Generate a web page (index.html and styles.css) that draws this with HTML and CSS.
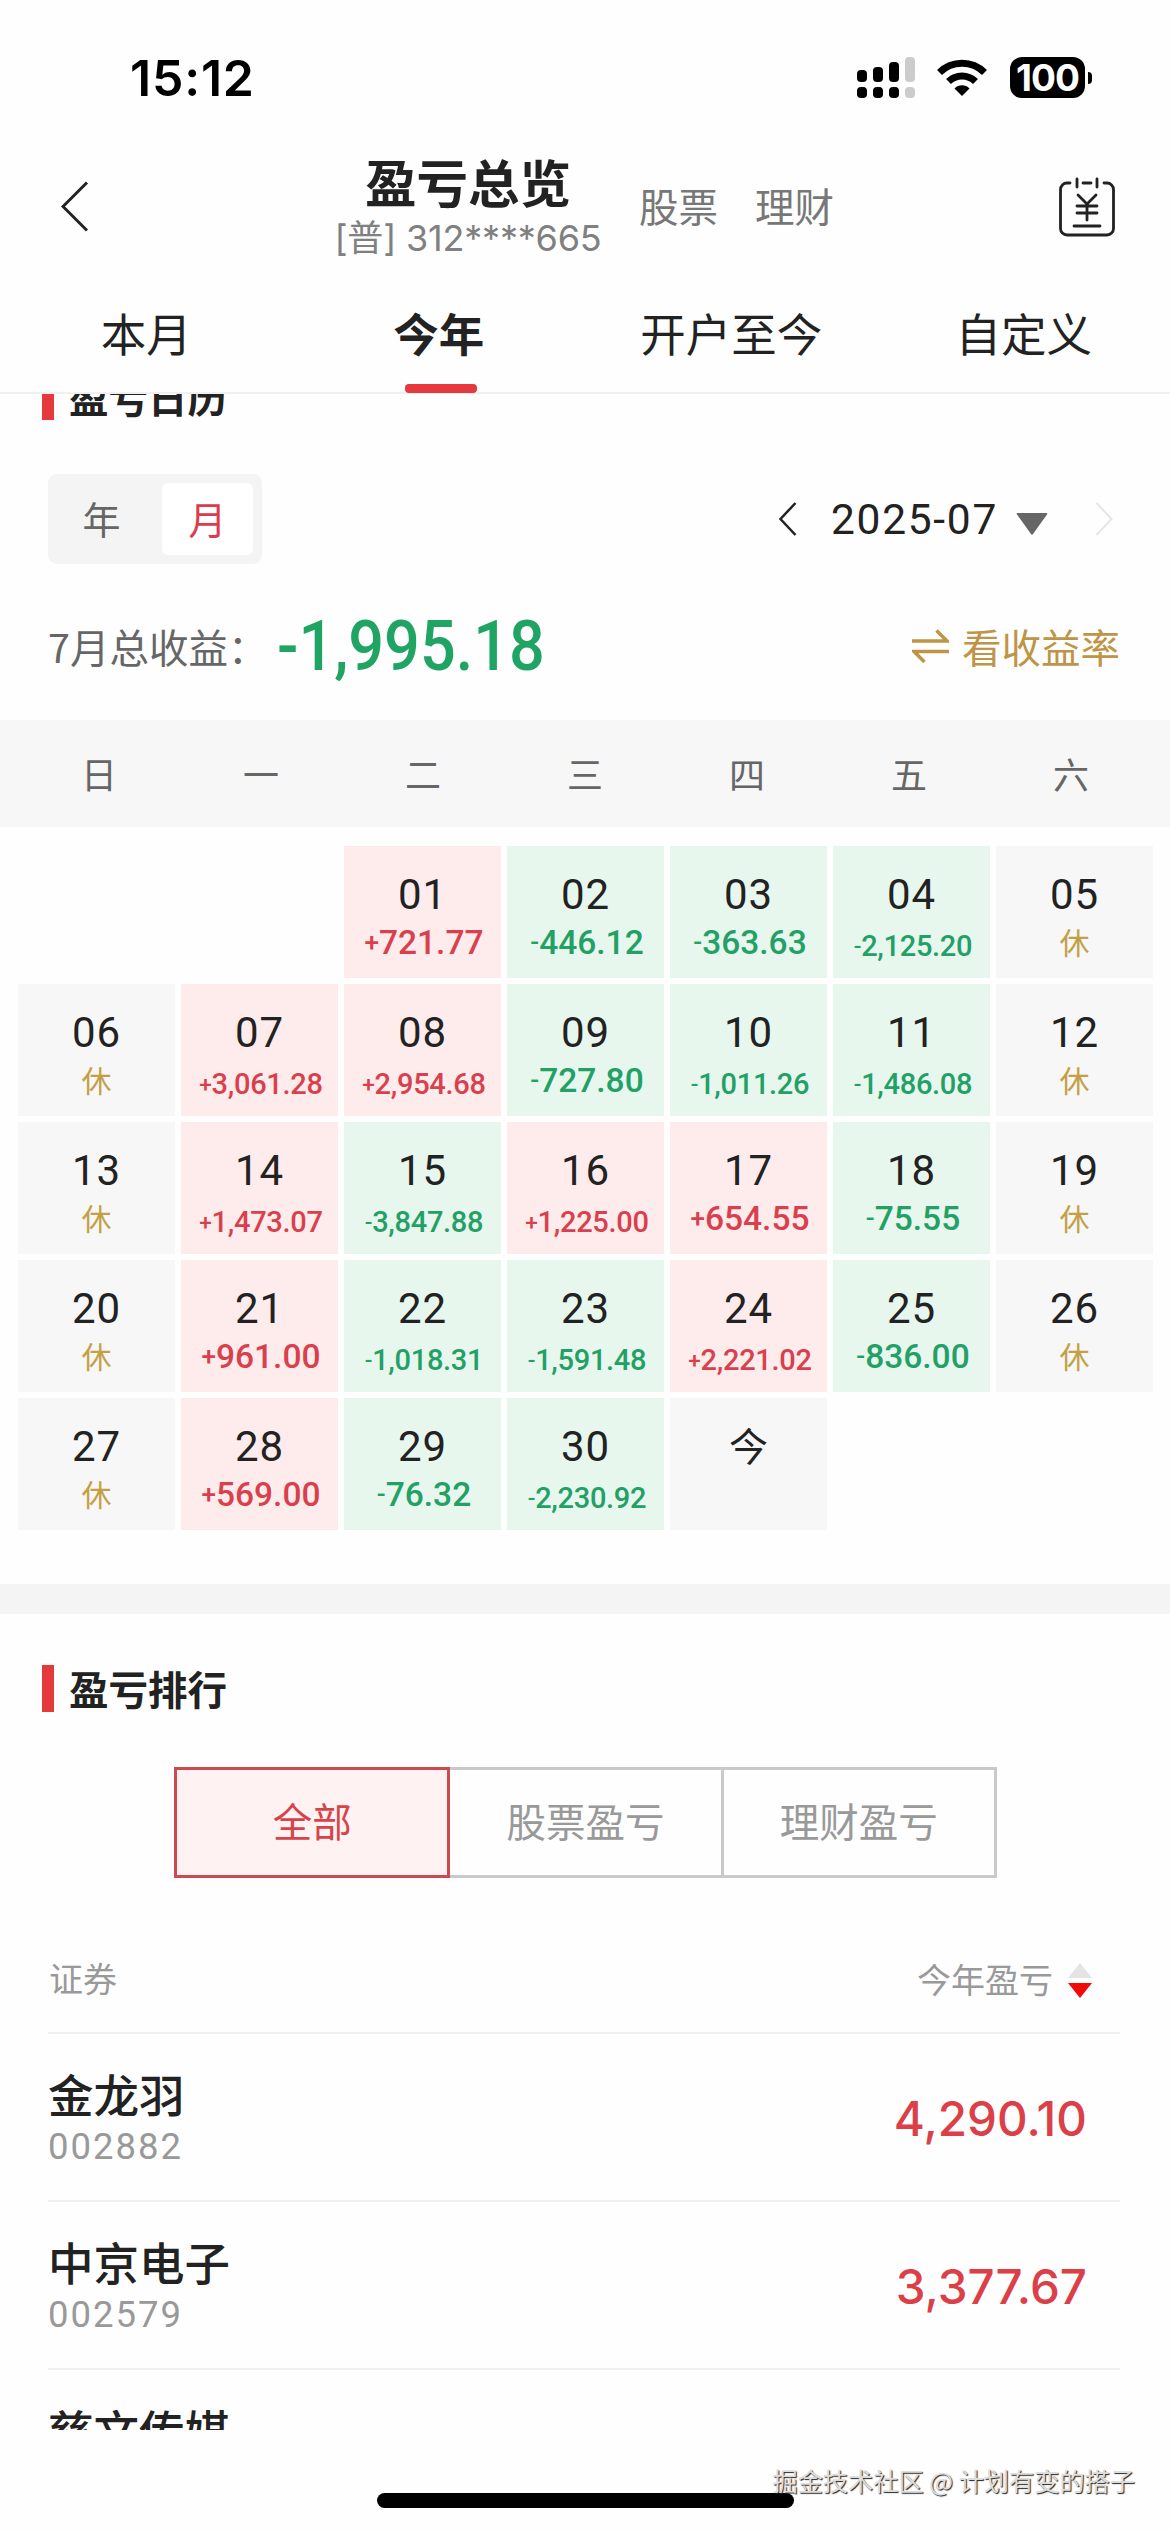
FILE: index.html
```html
<!DOCTYPE html>
<html lang="zh-CN">
  <head>
    <meta charset="UTF-8" />
    <meta name="viewport" content="width=device-width, initial-scale=1.0" />
    <title>盈亏总览</title>
    <link rel="stylesheet" href="styles.css">
  </head>
  <body>
    <div class="status-bar">
      <span class="time">15:12</span>
      <div class="status-icons">
        <svg class="signal" width="58" height="41" viewBox="0 0 58 41">
          <rect x="0" y="13" width="10" height="12" rx="4" />
          <rect x="16" y="10" width="10" height="15" rx="4" />
          <rect x="32" y="5" width="10" height="20" rx="4" />
          <rect class="off" x="48" y="0" width="10" height="25" rx="4" />
          <rect x="0" y="30" width="10" height="11" rx="4" />
          <rect x="16" y="30" width="10" height="11" rx="4" />
          <rect x="32" y="30" width="10" height="11" rx="4" />
          <rect class="off" x="48" y="30" width="10" height="11" rx="4" />
        </svg>
        <svg class="wifi" width="50" height="37" viewBox="0 0 50 37">
          <path d="M2.5 13.5a32 32 0 0 1 45 0" fill="none" stroke="#000" stroke-width="7" />
          <path d="M11.5 22.5a19.300 19.300 0 0 1 27 0" fill="none" stroke="#000" stroke-width="7" />
          <path d="M25 37l-7.500-7.500a10.500 10.500 0 0 1 15 0z" />
        </svg>
        <div class="battery">100</div>
        <span class="battery-tip"></span>
      </div>
    </div>

    <div class="header">
      <svg class="back" width="28" height="51" viewBox="0 0 28 51">
        <path d="M26 1.500L2 25.500l24 24" fill="none" stroke="#222" stroke-width="3" />
      </svg>
      <div class="account">
        <h1>盈亏总览</h1>
        <p>[普] 312****665</p>
      </div>
      <a class="header-link">股票</a>
      <a class="header-link">理财</a>
      <svg class="bill" width="56" height="60" viewBox="0 0 56 60" fill="none" stroke="#222" stroke-width="2.800" stroke-linecap="round">
        <path d="M11 6H8a6.500 6.500 0 0 0-6.500 6.500v39A6.500 6.500 0 0 0 8 58h40a6.500 6.500 0 0 0 6.500-6.500v-39A6.500 6.500 0 0 0 48 6h-3M24 6h8M18 2v8M38 2v8" />
        <path d="M19 18l9 9 9-9M28 27v16M18 29h20M18 36h20M15 49h26" />
      </svg>
    </div>

    <div class="tabs">
      <div class="tab">本月</div>
      <div class="tab active">今年</div>
      <div class="tab">开户至今</div>
      <div class="tab">自定义</div>
    </div>

    <div class="content">
      <h2 class="section-title">盈亏日历</h2>

      <div class="calendar-bar">
        <div class="switch">
          <span>年</span>
          <span class="active">月</span>
        </div>
        <div class="month-picker">
          <svg width="18" height="34" viewBox="0 0 18 34"><path d="M16.500 1L1.500 17l15 16" fill="none" stroke="#222" stroke-width="2.500" /></svg>
          <span class="month">2025-07</span>
          <svg class="caret" width="32" height="22" viewBox="0 0 32 22"><path d="M1.500 0h29q1.500 0 .500 1.500L17 21q-1 1-2 0L1 1.500Q0 0 1.500 0z" fill="#666" /></svg>
          <svg class="next" width="18" height="34" viewBox="0 0 18 34"><path d="M1.500 1l15 16-15 16" fill="none" stroke="#e6e6e6" stroke-width="2" /></svg>
        </div>
      </div>

      <div class="summary">
        <span class="summary-label">7月总收益：</span>
        <span class="summary-value">-1,995.18</span>
        <a class="rate-link">
          <svg width="37" height="34" viewBox="0 0 37 34" fill="none" stroke="#be9547" stroke-width="3.500"><path d="M0 12h35L24.500 1.500M37 22.500H2L12.500 33" /></svg>
          看收益率
        </a>
      </div>

      <div class="weekdays">
        <span>日</span><span>一</span><span>二</span><span>三</span><span>四</span><span>五</span><span>六</span>
      </div>
      <div class="days" id="days"></div>

      <div class="divider"></div>

      <h2 class="section-title">盈亏排行</h2>
      <div class="segment">
        <div class="segment-item active">全部</div>
        <div class="segment-item">股票盈亏</div>
        <div class="segment-item">理财盈亏</div>
      </div>

      <div class="ranking">
        <div class="ranking-head">
          <span>证券</span>
          <span class="sort">
            今年盈亏
            <svg width="24" height="36" viewBox="0 0 24 36"><path d="M12 0l12 15H0z" fill="#e4e4e4" /><path d="M0 20h24L12 35z" fill="#f00a0a" /></svg>
          </span>
        </div>
        <div class="stock">
          <div>
            <h3>金龙羽</h3>
            <p>002882</p>
          </div>
          <span class="stock-value">4,290.10</span>
        </div>
        <div class="stock">
          <div>
            <h3>中京电子</h3>
            <p>002579</p>
          </div>
          <span class="stock-value">3,377.67</span>
        </div>
        <div class="stock">
          <div>
            <h3>慈文传媒</h3>
          </div>
        </div>
      </div>
    </div>

    <div class="bottom">
      <div class="home-indicator"></div>
      <span class="watermark">掘金技术社区 @ 计划有变的搭子</span>
    </div>

    <script>
      // 每日盈亏，null 为休市
      const profits = [
        "+721.77", "-446.12", "-363.63", "-2,125.20", null,
        null, "+3,061.28", "+2,954.68", "-727.80", "-1,011.26", "-1,486.08", null,
        null, "+1,473.07", "-3,847.88", "+1,225.00", "+654.55", "-75.55", null,
        null, "+961.00", "-1,018.31", "-1,591.48", "+2,221.02", "-836.00", null,
        null, "+569.00", "-76.32", "-2,230.92",
      ];

      function renderDay(profit, index) {
        const day = String(index + 1).padStart(2, "0");
        if (!profit) {
          return `<div class="day"><b>${day}</b><i class="rest">休</i></div>`;
        }
        const type = profit[0] === "+" ? "up" : "down";
        const size = profit.length > 8 ? "small" : "";
        return `
          <div class="day ${type}">
            <b>${day}</b>
            <i class="${size}"><span class="sign">${profit[0]}</span>${profit.slice(1)}</i>
          </div>
        `;
      }

      document.getElementById("days").innerHTML =
        profits.map(renderDay).join("") +
        `<div class="day today"><b>今</b></div>`;
    </script>
  </body>
</html>
```

FILE: styles.css
```css
* {
  box-sizing: border-box;
}

body {
  width: 1170px;
  height: 2532px;
  margin: 0;
  display: flex;
  flex-direction: column;
  overflow: hidden;
  background: #fefefe;
  color: #222;
  font-family: "Noto Sans CJK SC", sans-serif;
}

h1,
h2,
h3,
p {
  margin: 0;
}

svg {
  display: block;
  flex: none;
}

.status-bar {
  height: 155px;
  padding: 0 78px 0 130px;
  display: flex;
  justify-content: space-between;
  align-items: center;
  color: #000;
  font-family: Inter, sans-serif;
}

.time {
  font-size: 50px;
  font-weight: 600;
  letter-spacing: 0.8px;
}

.status-icons {
  display: flex;
  align-items: center;
}

.signal .off {
  fill: #ccc;
}

.wifi {
  margin: 0 23px 0 22px;
}

.battery {
  width: 75px;
  height: 41px;
  border-radius: 12px;
  background: #000;
  color: #fff;
  font-size: 37px;
  font-weight: 700;
  line-height: 41px;
  text-align: center;
  letter-spacing: -1px;
}

.battery-tip {
  width: 4px;
  height: 12px;
  margin-left: 3px;
  border-radius: 0 6px 6px 0;
  background: #000;
}

.header {
  height: 120px;
  padding: 0 55px 17px 61px;
  display: flex;
  align-items: center;
}

.bill {
  margin-left: auto;
}

.account {
  width: 268px;
  margin: 2px 37px 0 245px;
  text-align: center;
}

.account h1 {
  font-size: 51.5px;
  font-weight: 700;
  line-height: 60px;
}

.account p {
  color: #808080;
  font-family: Inter, "Noto Sans CJK SC", sans-serif;
  font-size: 36px;
  line-height: 54px;
  white-space: nowrap;
  letter-spacing: -0.2px;
}

.header-link {
  margin-right: 37px;
  color: #777;
  font-size: 39.5px;
  line-height: 50px;
  padding-bottom: 3px;
}

.tabs {
  height: 119px;
  display: flex;
  border-bottom: 2px solid #f0f0f0;
}

.tab {
  flex: 1;
  height: 119px;
  display: flex;
  flex-direction: column;
  align-items: center;
  padding-top: 25px;
  font-size: 45.5px;
  line-height: 64px;
}

.tab.active {
  font-weight: 700;
}

.tab.active::after {
  content: "";
  width: 72px;
  height: 9px;
  margin: 20px 0 0 4px;
  border-radius: 4px;
  background: #e6393e;
}

.content {
  height: 2036px;
  overflow: hidden;
}

.section-title {
  height: 47px;
  margin-left: 42px;
  padding-left: 15px;
  border-left: 12px solid #e6393e;
  font-size: 39.5px;
  font-weight: 700;
  line-height: 45px;
}

.content > .section-title:first-child {
  margin-top: -21px;
}

.calendar-bar {
  margin-top: 54px;
  padding: 0 57px 0 48px;
  display: flex;
  justify-content: space-between;
  align-items: center;
}

.switch {
  width: 214px;
  height: 90px;
  padding: 9px;
  display: flex;
  border-radius: 9px;
  background: #f4f4f4;
  color: #666;
  font-size: 38px;
  line-height: 69px;
  text-align: center;
}

.switch span {
  flex: 1;
  height: 72px;
}

.switch span:first-child {
  flex: 0 0 105px;
  padding-right: 16px;
}

.switch .active {
  border-radius: 6px;
  background: #fff;
  color: #dc3c4b;
}

.month-picker {
  display: flex;
  align-items: center;
}

.month {
  margin: 0 18px 0 34px;
  font-family: Roboto, sans-serif;
  font-size: 42.5px;
  letter-spacing: 1.7px;
}

.caret {
  margin-top: 9px;
}

.next {
  margin-left: 47px;
}

.summary {
  height: 156px;
  padding: 0 50px 0 48px;
  display: flex;
  align-items: center;
}

.summary-label {
  width: 229px;
  padding-top: 7px;
  color: #666;
  font-size: 39.5px;
  white-space: nowrap;
}

.summary-value {
  margin-top: 8px;
  color: #20a464;
  font-family: Roboto, sans-serif;
  font-size: 70px;
  font-weight: 500;
  transform: scaleX(0.9);
  transform-origin: left;
}

.rate-link {
  margin-left: auto;
  padding-top: 7px;
  display: flex;
  align-items: center;
  gap: 13px;
  color: #be9547;
  font-size: 39.5px;
}

.weekdays {
  height: 107px;
  padding: 0 18px;
  display: grid;
  grid-template-columns: repeat(7, 1fr);
  background: #f7f7f7;
  color: #666;
  font-size: 36px;
  line-height: 106px;
  text-align: center;
}

.days {
  height: 757px;
  padding: 19px 17px 0 18px;
  display: grid;
  grid-template-columns: repeat(7, 157px);
  grid-auto-rows: 132px;
  gap: 6px;
}

.day {
  padding-top: 23px;
  background: #f7f7f7;
  text-align: center;
}

.day:first-child {
  grid-column-start: 3;
}

.day b {
  display: block;
  font-family: Roboto, "Noto Sans CJK SC", sans-serif;
  font-size: 42px;
  font-weight: 400;
  line-height: 52px;
  letter-spacing: 0.8px;
}

.day i {
  display: block;
  padding-left: 3px;
  font-family: Roboto, sans-serif;
  font-size: 33.5px;
  font-style: normal;
  font-weight: 500;
  line-height: 44px;
}

.day i.small {
  padding-top: 3px;
  font-size: 29px;
  letter-spacing: -0.3px;
}

.day i.rest {
  padding-left: 0;
  color: #c3a045;
  font-family: "Noto Sans CJK SC", sans-serif;
  font-size: 30px;
  font-weight: 400;
  line-height: 40px;
}

.sign {
  font-size: 0.78em;
  line-height: 1;
  vertical-align: 0.1em;
}

.up {
  background: #feecec;
}

.up i {
  color: #d9404d;
}

.down {
  background: #e7f7ee;
}

.down i {
  color: #22a066;
}

.today b {
  font-size: 39px;
  line-height: 54px;
  letter-spacing: 0;
}

.divider {
  height: 30px;
  margin-bottom: 51px;
  background: #f4f4f4;
}

.segment {
  width: 823px;
  height: 111px;
  margin: 55px auto 0 174px;
  display: flex;
}

.segment-item {
  flex: 1;
  border: 3px solid #c9c9c9;
  border-left: 0;
  color: #999;
  font-size: 39.5px;
  line-height: 100px;
  text-align: center;
}

.segment-item.active {
  border: 3px solid #cc4a50;
  background: #fef3f2;
  color: #d8434a;
}

.ranking {
  margin: 0 50px 0 48px;
}

.ranking-head {
  height: 156px;
  padding: 50px 28px 0 1px;
  display: flex;
  justify-content: space-between;
  border-bottom: 2px solid #f0f0f0;
  color: #999;
  font-size: 34px;
  line-height: 100px;
}

.sort {
  display: flex;
  align-items: center;
  height: 102px;
  gap: 15px;
}

.sort svg {
  margin-top: 3px;
}

.stock {
  height: 168px;
  padding: 0 33px 0 0;
  display: flex;
  justify-content: space-between;
  border-bottom: 2px solid #f0f0f0;
}

.stock h3 {
  padding-top: 29px;
  font-size: 45.5px;
  font-weight: 500;
  line-height: 60px;
}

.stock p {
  color: #999;
  font-family: Roboto, sans-serif;
  font-size: 36.5px;
  line-height: 48px;
  letter-spacing: 2px;
}

.stock-value {
  color: #db4049;
  font-family: Inter, sans-serif;
  font-size: 47.5px;
  font-weight: 500;
  line-height: 169px;
}

.bottom {
  position: relative;
  flex: 1;
}

.home-indicator {
  width: 417px;
  height: 15px;
  margin: 63px auto 0;
  border-radius: 8px;
  background: #000;
}

.watermark {
  position: absolute;
  top: 32px;
  right: 35px;
  color: #ddd;
  font-size: 25.2px;
  line-height: 36px;
  text-shadow: 1px 1px 1px #222;
}
```
